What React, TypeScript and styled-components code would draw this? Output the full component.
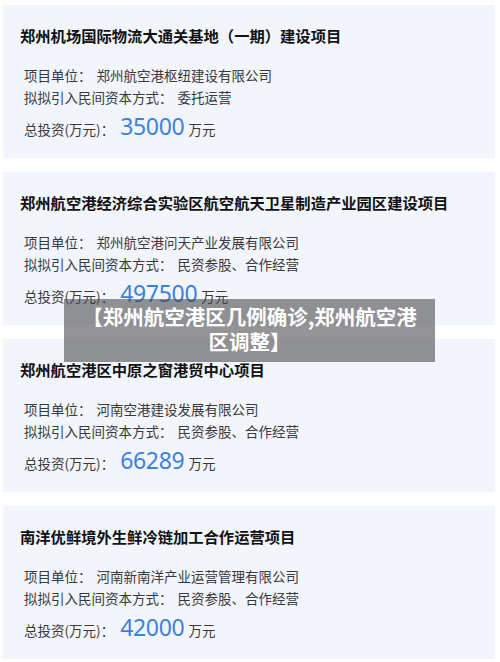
import React from "react";
import styled, { createGlobalStyle } from "styled-components";

const GlobalStyle = createGlobalStyle`
  html, body {
    margin: 0;
    padding: 0;
    background: #ffffff;
  }
  body {
    font-family: "Noto Sans CJK SC", "Noto Sans", sans-serif;
  }
`;

const Page = styled.div`
  position: relative;
  width: 500px;
  height: 662px;
  overflow: hidden;
  display: flex;
  flex-direction: column;
  gap: 14px;
  padding: 5px 0 0 3px;
  box-sizing: border-box;
`;

const Card = styled.div`
  width: 492px;
  height: 153px;
  box-sizing: border-box;
  padding: 19px 20px 0 17px;
  background: #f2f5fb;
  flex-shrink: 0;
`;

const Title = styled.h3`
  margin: 0;
  font-size: 15.3px;
  line-height: 22px;
  font-weight: 700;
  color: #111111;
  white-space: nowrap;
`;

const Info = styled.div`
  margin-top: 18px;
  padding-left: 4px;
  color: #3a3a3a;
  font-size: 13.5px;
`;

const Row = styled.div`
  line-height: 22px;
  white-space: nowrap;
`;

const Value = styled.span`
  margin-left: 5px;
`;

const TotalRow = styled.div`
  display: flex;
  align-items: baseline;
  margin-top: 3px;
  line-height: 30px;
  white-space: nowrap;
`;

const Amount = styled.span`
  margin: 0 4px 0 6px;
  font-family: "Noto Sans", "Open Sans", sans-serif;
  font-size: 23px;
  color: #3b82e0;
  letter-spacing: -0.3px;
`;

const Overlay = styled.div`
  position: absolute;
  left: 64px;
  top: 299px;
  width: 371px;
  height: 63px;
  box-sizing: border-box;
  padding: 5px 12px;
  background: rgba(70, 70, 74, 0.58);
  color: #ffffff;
  font-size: 20.5px;
  font-weight: 700;
  line-height: 25px;
  text-align: center;
`;

type Project = {
  title: string;
  unit: string;
  mode: string;
  amount: string;
};

const projects: Project[] = [
  {
    title: "郑州机场国际物流大通关基地（一期）建设项目",
    unit: "郑州航空港枢纽建设有限公司",
    mode: "委托运营",
    amount: "35000",
  },
  {
    title: "郑州航空港经济综合实验区航空航天卫星制造产业园区建设项目",
    unit: "郑州航空港问天产业发展有限公司",
    mode: "民资参股、合作经营",
    amount: "497500",
  },
  {
    title: "郑州航空港区中原之窗港贸中心项目",
    unit: "河南空港建设发展有限公司",
    mode: "民资参股、合作经营",
    amount: "66289",
  },
  {
    title: "南洋优鲜境外生鲜冷链加工合作运营项目",
    unit: "河南新南洋产业运营管理有限公司",
    mode: "民资参股、合作经营",
    amount: "42000",
  },
];

function ProjectCard({ project }: { project: Project }) {
  return (
    <Card>
      <Title>{project.title}</Title>
      <Info>
        <Row>
          项目单位：<Value>{project.unit}</Value>
        </Row>
        <Row>
          拟拟引入民间资本方式：<Value>{project.mode}</Value>
        </Row>
        <TotalRow>
          总投资(万元)：<Amount>{project.amount}</Amount>万元
        </TotalRow>
      </Info>
    </Card>
  );
}

export default function App() {
  return (
    <>
      <GlobalStyle />
      <Page>
        {projects.map((p) => (
          <ProjectCard key={p.title} project={p} />
        ))}
        <Overlay>【郑州航空港区几例确诊,郑州航空港区调整】</Overlay>
      </Page>
    </>
  );
}
